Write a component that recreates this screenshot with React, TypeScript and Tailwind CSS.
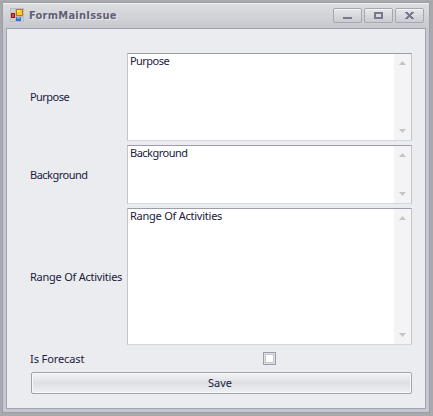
import type { ReactNode } from 'react';

function AppIcon() {
  return (
    <svg width="14" height="14" viewBox="0 0 14 14" shapeRendering="crispEdges">
      <rect x="0.5" y="0.5" width="13" height="13" fill="#cfcfd2" stroke="#bcbcbf" />
      <path d="M5.5 1V13M1 8.5H13" stroke="#bcbcbf" />
      <rect x="6" y="1" width="7" height="7" fill="#b87d08" />
      <rect x="7" y="2" width="5" height="5" fill="#ffc52e" />
      <rect x="7" y="2" width="3" height="2" fill="#ffe27b" />
      <rect x="1" y="5" width="4" height="5" fill="#9b1410" />
      <rect x="2" y="6" width="2" height="3" fill="#d94a3d" />
      <rect x="6" y="9" width="5" height="4" fill="#3370d4" />
      <rect x="7" y="9" width="3" height="2" fill="#74aaf5" />
    </svg>
  );
}

function CaptionButton({ label, children }: { label: string; children: ReactNode }) {
  return (
    <button
      aria-label={label}
      className="flex h-[15px] w-[29px] items-center justify-center rounded-[2px] border border-[#a6a7b1] bg-linear-to-b from-[#e6e7ea] to-[#cbccd2] shadow-[inset_0_1px_0_#f4f4f6]"
    >
      <svg width="9" height="7" viewBox="0 0 9 7" fill="none" shapeRendering="crispEdges">
        {children}
      </svg>
    </button>
  );
}

function Memo({ text, size }: { text: string; size: string }) {
  return (
    <div
      className={`flex w-[285px] shrink-0 border border-t-[#9c9da9] border-r-[#c3c4cc] border-b-[#d6d7dd] border-l-[#c3c4cc] bg-white ${size}`}
    >
      <div className="flex-1 pl-[2px] leading-[13px]">{text}</div>
      <div className="flex w-[17px] flex-col items-center justify-between bg-[#f4f4f6] py-[7px]">
        <svg width="7" height="4" viewBox="0 0 7 4" fill="#c4c4cb">
          <path d="M3.5 0L7 4H0Z" />
        </svg>
        <svg width="7" height="4" viewBox="0 0 7 4" fill="#c4c4cb">
          <path d="M0 0H7L3.5 4Z" />
        </svg>
      </div>
    </div>
  );
}

function Field({ label, size, tracking }: { label: string; size: string; tracking: string }) {
  return (
    <div className={`flex items-center ${tracking}`}>
      <div className="w-[97px] shrink-0 pt-[1px] whitespace-nowrap">{label}</div>
      <Memo text={label} size={size} />
    </div>
  );
}

export default function App() {
  return (
    <div className="h-[416px] w-[433px] bg-[#a9a9ab] p-[2px] font-['Noto_Sans','Open_Sans',sans-serif] text-[11px] text-[#20203c]">
      <div className="flex h-[411px] w-[428px] flex-col border border-[#9c9da9] bg-[#c5c6cf] px-[3px] pb-[3px]">
        <header className="-mx-[3px] flex h-[25px] shrink-0 items-start border-t border-[#f0f0f3] bg-linear-to-b from-[#dcdde1] to-[#c8c9cf] pt-[4px] pr-[5px] pl-[7px]">
          <AppIcon />
          <h1 className="ml-[5px] flex-1 pt-[1px] font-['DejaVu_Sans_Condensed','DejaVu_Sans',sans-serif] text-[11px] leading-[14px] font-bold tracking-[0.25px] text-[#5f6073] [text-shadow:1px_1px_0_#e8e9ed]">
            FormMainIssue
          </h1>
          <div className="flex gap-[2px]">
            <CaptionButton label="Minimize">
              <path d="M0 6H9" stroke="#777889" strokeWidth="2" />
            </CaptionButton>
            <CaptionButton label="Maximize">
              <rect x="1" y="1" width="7" height="5" stroke="#777889" strokeWidth="2" />
            </CaptionButton>
            <CaptionButton label="Close">
              <path
                d="M0 0H3V1H4V2H5V1H6V0H9V1H8V2H7V3H6V4H7V5H8V6H9V7H6V6H5V5H4V6H3V7H0V6H1V5H2V4H3V3H2V2H1V1H0Z"
                fill="#777889"
              />
            </CaptionButton>
          </div>
        </header>
        <main className="flex flex-1 flex-col border border-[#a2a3b0] bg-[#ebecef] pt-[24px] pl-[23px]">
          <div className="flex flex-col gap-[4px]">
            <Field label="Purpose" size="h-[88px]" tracking="tracking-[-0.55px]" />
            <Field label="Background" size="h-[59px]" tracking="tracking-[-0.5px]" />
            <Field label="Range Of Activities" size="h-[137px]" tracking="tracking-[-0.24px]" />
          </div>
          <div className="flex h-[27px] items-center">
            <div className="w-[233px] pt-[1px] tracking-[-0.1px]">Is Forecast</div>
            <div className="size-[13px] border border-[#9c9da9] bg-[#dddee4] p-px">
              <div className="size-[9px] border border-[#c8c9d0] bg-white" />
            </div>
          </div>
          <button className="ml-px flex h-[22px] w-[381px] items-center justify-center rounded-[2px] border border-[#a2a3ae] bg-linear-to-b from-[#f3f4f6] via-[#dddfe4] to-[#f0f1f3] pr-[3px] shadow-[inset_0_0_0_1px_#f8f8fa]">
            Save
          </button>
        </main>
      </div>
    </div>
  );
}
